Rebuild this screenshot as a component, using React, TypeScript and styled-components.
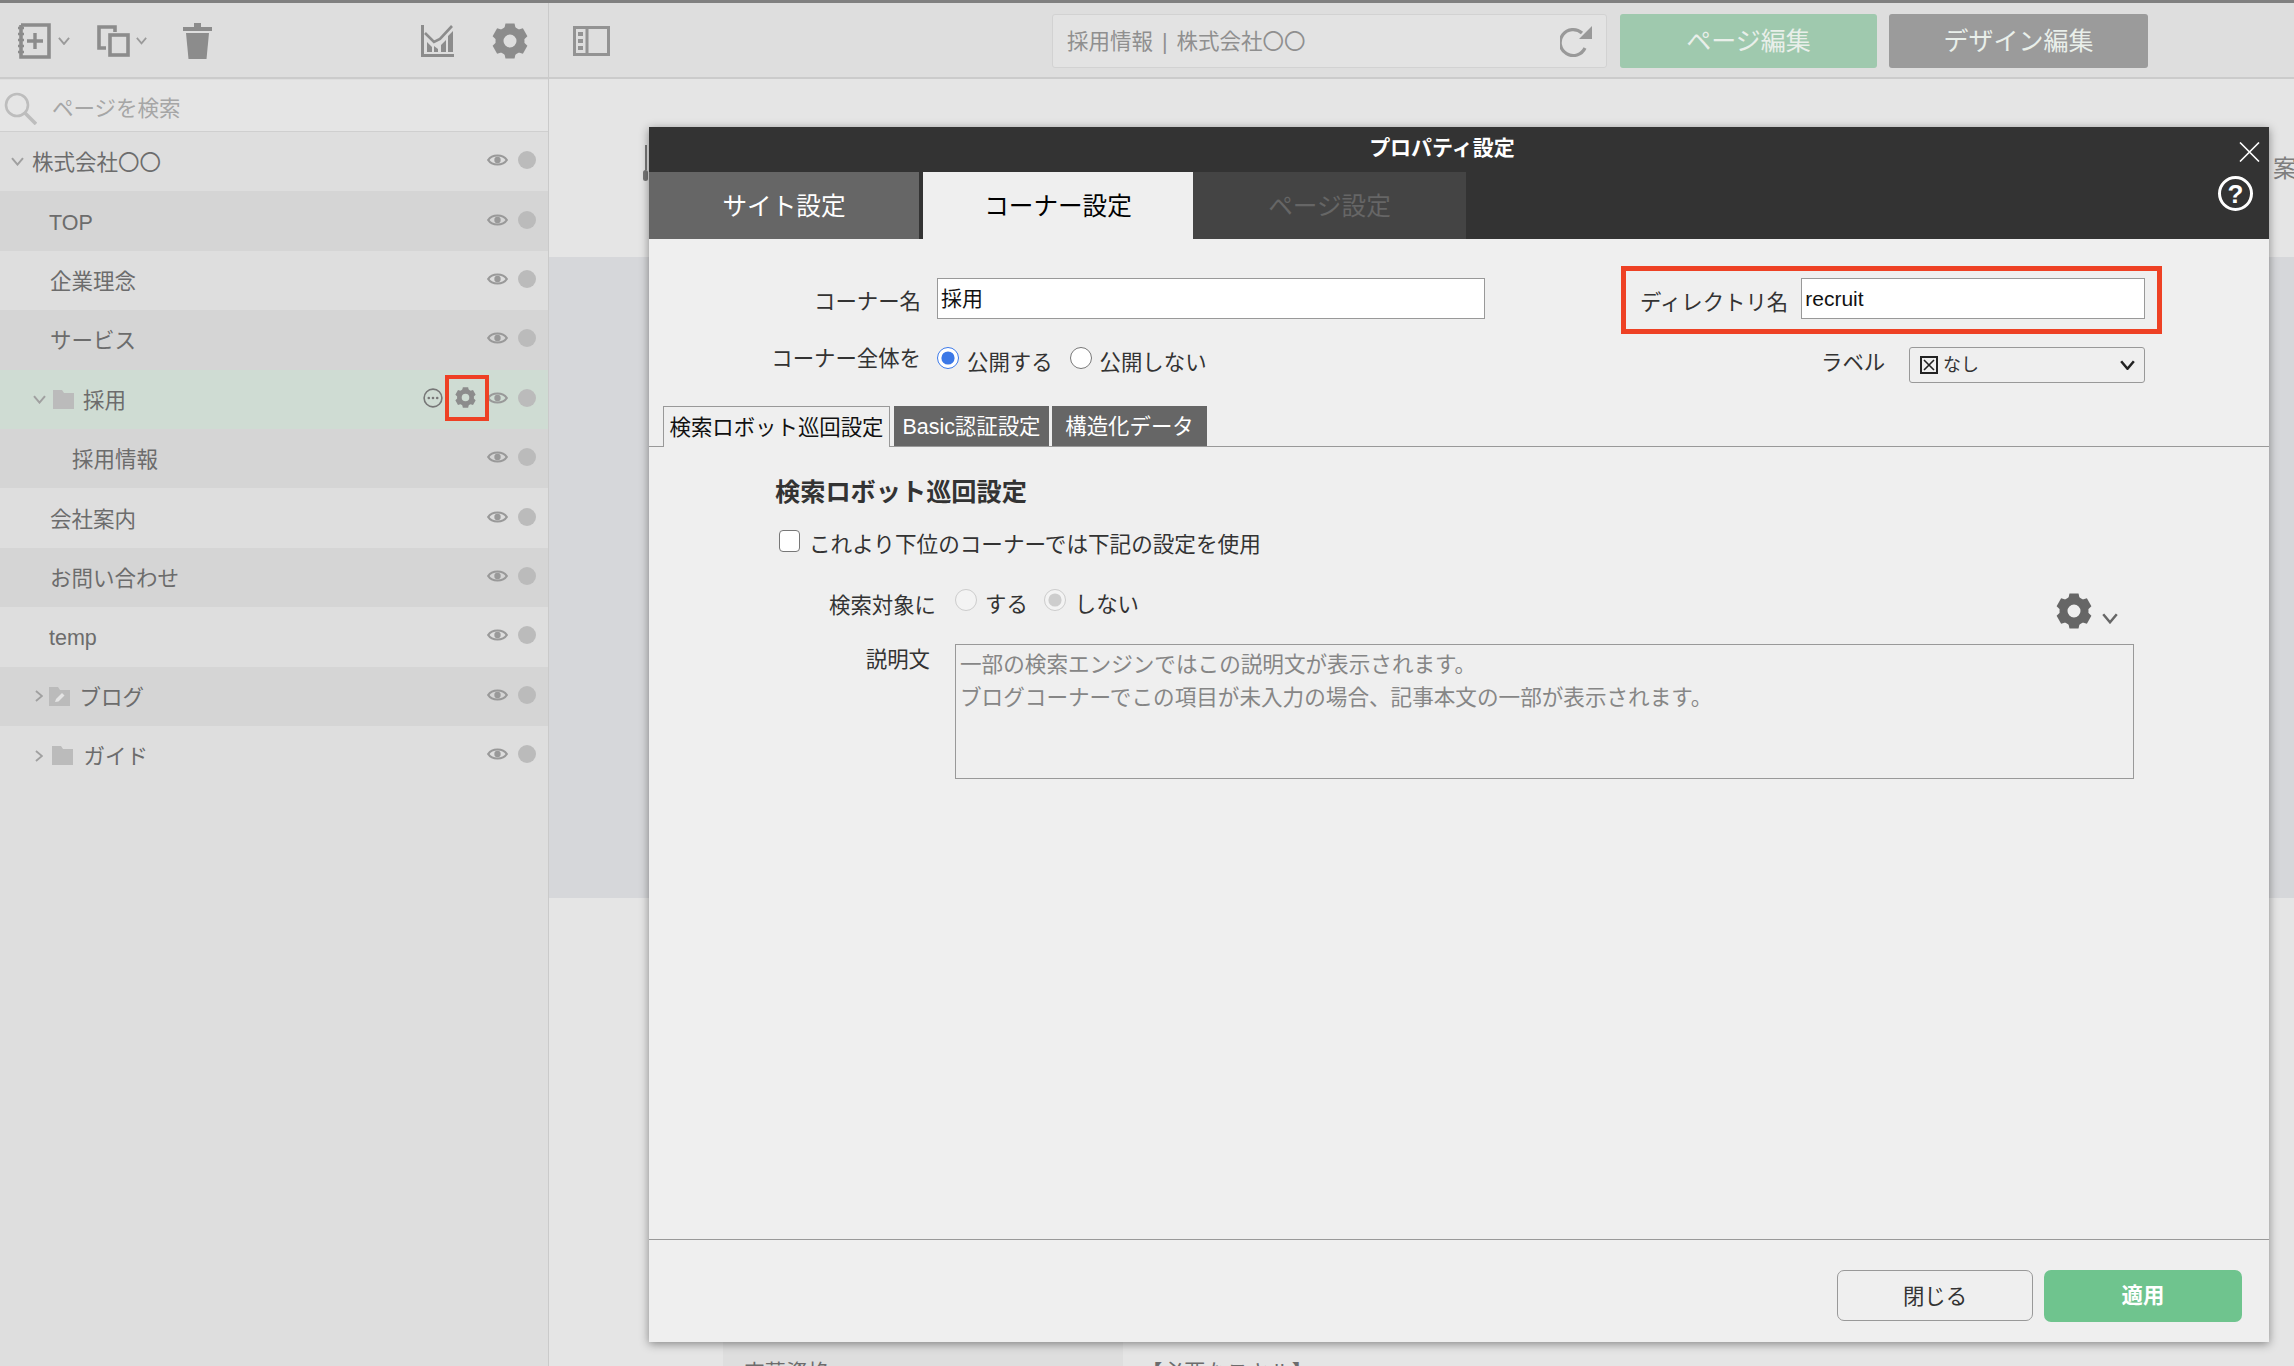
import React from "react";
import styled, { createGlobalStyle } from "styled-components";

const Global = createGlobalStyle`
  html, body { margin: 0; padding: 0; background: #e5e5e5; }
  body { font-family: "Liberation Sans", "Noto Sans CJK JP", "Noto Sans", sans-serif; overflow: hidden; }
  * { box-sizing: border-box; }
`;

const Page = styled.div`
  position: relative; width: 2294px; height: 1366px; overflow: hidden; background: #e5e5e5;
`;
const TopLine = styled.div`height: 3px; background: #808080;`;
const Shell = styled.div`display: flex; height: 1363px;`;

/* Sidebar */
const Sidebar = styled.aside`
  width: 549px; flex: none; background: #dedede; border-right: 1px solid #cacaca;
`;
const SideToolbar = styled.div`
  height: 76px; display: flex; align-items: center; padding: 2px 20px 0 18px; border-bottom: 2px solid #cbcbcb;
`;
const ToolGroup = styled.div<{ $gap?: number; $ml?: number }>`
  display: flex; align-items: center; gap: ${(p) => p.$gap ?? 7}px; margin-left: ${(p) => p.$ml ?? 0}px;
`;
const ToolSpacer = styled.div`flex: 1;`;
const SearchBox = styled.div`
  height: 52px; margin-top: 1px; background: #e5e5e5; border-bottom: 1px solid #cfcfcf; display: flex; align-items: center;
  padding: 6px 0 0 4px; gap: 15px; font-size: 21.5px; line-height: 30px; color: #a6a6a6;
`;
const Row = styled.div<{ $tone: "light" | "dark" | "green"; $indent: number; $gap?: number }>`
  position: relative; height: 59.4px; display: flex; align-items: center; padding: 0 12px 0 ${(p) => p.$indent}px;
  gap: ${(p) => p.$gap ?? 7}px;
  background: ${(p) => (p.$tone === "light" ? "#dedede" : p.$tone === "dark" ? "#d5d5d5" : "#cfdcd3")};
`;
const RowLabel = styled.span<{ $ml?: number }>`
  font-size: 21.5px; line-height: 30px; color: #6c6c6c; margin-left: ${(p) => p.$ml ?? 0}px; margin-top: 3px;
`;
const RowControls = styled.div`
  margin-left: auto; display: flex; align-items: center; gap: 10px; margin-bottom: 3px;
`;
const HoverTools = styled.div`display: flex; align-items: center; gap: 12px; margin-right: 1px;`;
const Dot = styled.span`
  display: block; width: 18px; height: 18px; border-radius: 50%; background: #bbbbbb;
`;
const GearHighlight = styled.div`
  position: absolute; left: 445px; top: 5px; width: 44px; height: 46px; border: 4px solid #ee4124;
`;

/* Main */
const Main = styled.main`flex: 1; min-width: 0; position: relative;`;
const MainToolbar = styled.div`
  height: 76px; display: flex; align-items: center; padding: 2px 0 0 24px; background: #dedede; border-bottom: 2px solid #cbcbcb;
`;
const UrlBox = styled.div`
  width: 555px; height: 54px; margin-left: 442px; background: #e3e3e3; border: 1px solid #d2d2d2; border-radius: 3px;
  display: flex; align-items: center; justify-content: space-between; padding: 0 14px 0 14px;
  font-size: 21.5px; line-height: 28px; color: #8f8f8f;
`;
const UrlText = styled.span`word-spacing: 3px; margin-top: 1px;`;
const ModeButton = styled.div<{ $bg: string; $w: number; $ml: number }>`
  width: ${(p) => p.$w}px; height: 54px; margin-left: ${(p) => p.$ml}px; background: ${(p) => p.$bg}; border-radius: 3px;
  display: flex; align-items: center; justify-content: center; font-size: 25px; line-height: 34px; color: #e9efea;
`;
const Canvas = styled.div`position: relative;`;
const CanvasTitle = styled.div`
  height: 178px; padding: 73px 0 0 1724px; font-size: 24px; line-height: 34px; color: #7e7e7e; white-space: nowrap;
`;
const Band = styled.div`height: 641px; background: #d6d7da;`;
const TableRow = styled.div`display: flex; margin: 433px 0 0 174px; font-size: 21.5px; line-height: 30px; color: #6c6c6c;`;
const TableHead = styled.div`width: 400px; height: 60px; background: #dedede; padding: 27px 0 0 20px;`;
const TableCell = styled.div`padding: 27px 0 0 18px;`;
const Handle = styled.div`
  position: absolute; left: 94px; top: 66px; width: 5px; height: 36px; display: flex; flex-direction: column; align-items: center;
`;
const HandleLine = styled.div`width: 2px; height: 25px; background: #777;`;
const HandleKnob = styled.div`width: 5px; height: 11px; border-radius: 3px; background: #777;`;

/* Modal */
const Modal = styled.section`
  position: absolute; left: 649px; top: 127px; width: 1620px; height: 1215px; background: #efefef;
  box-shadow: 0 2px 9px rgba(0, 0, 0, 0.42); display: flex; flex-direction: column;
`;
const ModalHead = styled.header`position: relative; background: #333; height: 112px; flex: none;`;
const ModalTitle = styled.h2`
  margin: 0; height: 45px; display: flex; align-items: center; justify-content: center;
  padding: 0 34px 4px 0; font-size: 21px; line-height: 30px; font-weight: 700; color: #fff;
`;
const MainTabs = styled.div`display: flex; height: 67px;`;
const MainTab = styled.div<{ $state: "idle" | "active" | "off"; $w: number; $mr?: number }>`
  width: ${(p) => p.$w}px; margin-right: ${(p) => p.$mr ?? 0}px; display: flex; align-items: center; justify-content: center;
  font-size: 24.6px; line-height: 34px; padding-top: 2px;
  background: ${(p) => (p.$state === "idle" ? "#666" : p.$state === "active" ? "#efefef" : "#444")};
  color: ${(p) => (p.$state === "idle" ? "#fff" : p.$state === "active" ? "#000" : "#666")};
`;
const CloseButton = styled.div`position: absolute; right: 9px; top: 15px; width: 21px; height: 20px; line-height: 0;`;
const HelpButton = styled.div`
  position: absolute; left: 1569px; top: 49px; width: 35px; height: 35px; border: 3px solid #fff; border-radius: 50%;
  display: flex; align-items: center; justify-content: center; color: #fff; font-size: 26px; line-height: 1; font-weight: 700;
`;
const ModalBody = styled.div`flex: 1; min-height: 0; display: flex; flex-direction: column;`;
const FieldRowA = styled.div`display: flex; align-items: flex-start; padding-top: 27px;`;
const FieldRowB = styled.div`display: flex; align-items: flex-start; margin-top: 13px; padding-right: 124px;`;
const RightLabel = styled.div<{ $w: number; $mt?: number }>`
  width: ${(p) => p.$w}px; flex: none; text-align: right; font-size: 21.4px; line-height: 30px; color: #333; white-space: nowrap;
  margin-top: ${(p) => p.$mt ?? 0}px;
`;
const TextField = styled.div<{ $w: number }>`
  width: ${(p) => p.$w}px; height: 41px; background: #fff; border: 1px solid #999; padding-left: 3px;
  font-size: 21px; line-height: 40px; color: #111; flex: none;
`;
const NameGroup = styled.div`display: flex; align-items: flex-start; gap: 16px; padding-top: 12px;`;
const DirectoryBox = styled.div`
  width: 541px; height: 68px; margin-left: 136px; border: 5px solid #ee4124; display: flex; align-items: flex-start;
  padding: 7px 12px 0 14px; gap: 13px;
`;
const DirectoryLabel = styled.div`font-size: 21.4px; line-height: 30px; color: #333; white-space: nowrap; margin-top: 10px;`;
const RadioGroup = styled.div<{ $ml: number; $gap: number }>`
  display: flex; align-items: flex-start; margin-left: ${(p) => p.$ml}px; gap: ${(p) => p.$gap}px;
`;
const RadioItem = styled.label<{ $gap: number }>`
  display: flex; align-items: flex-start; gap: ${(p) => p.$gap}px; font-size: 21.4px; line-height: 30px; color: #333;
`;
const Radio = styled.input`
  width: 22px; height: 22px; margin: 0; accent-color: #3b78e7; flex: none;
`;
const RadioText = styled.span`margin-top: 1px;`;
const LabelSelectGroup = styled.div`margin-left: auto; display: flex; align-items: flex-start; gap: 26px;`;
const SelectBox = styled.div`
  width: 236px; height: 36px; border: 1px solid #999; border-radius: 3px; display: flex; align-items: center; padding: 0 9px 0 10px;
  gap: 5px; font-size: 18px; line-height: 26px; color: #333;
`;
const SelectChevron = styled.div`margin-left: auto; line-height: 0;`;
const SubTabs = styled.div`
  display: flex; height: 41px; margin-top: 23px; padding-left: 14px; border-bottom: 1px solid #999; flex: none;
`;
const SubTab = styled.div<{ $active?: boolean; $w: number; $mr?: number }>`
  width: ${(p) => p.$w}px; height: ${(p) => (p.$active ? 41 : 40)}px; margin-right: ${(p) => p.$mr ?? 0}px; padding-top: 2px;
  display: flex; align-items: center; justify-content: center; font-size: 21.4px; line-height: 30px; white-space: nowrap;
  background: ${(p) => (p.$active ? "#efefef" : "#666")}; color: ${(p) => (p.$active ? "#111" : "#fff")};
  border: ${(p) => (p.$active ? "1px solid #999" : "0")}; border-bottom: 0;
`;
const SectionHeading = styled.h3`
  margin: 28px 0 0 126px; font-size: 25.2px; line-height: 34px; font-weight: 700; color: #333;
`;
const CheckRow = styled.label`
  display: flex; align-items: flex-start; margin: 19px 0 0 130px; gap: 9px; font-size: 21.6px; line-height: 34px; color: #333;
`;
const CheckBox = styled.span`
  display: block; width: 21px; height: 22px; margin-top: 2px; background: #fff; border: 1.5px solid #777; border-radius: 4px; flex: none;
`;
const SearchRow = styled.div`display: flex; align-items: flex-start; height: 42px; margin-top: 27px; padding-right: 151px;`;
const GearMenu = styled.div`margin-left: auto; display: flex; align-items: flex-start; gap: 10px; padding-top: 4px;`;
const GearChevron = styled.div`margin-top: 20px; line-height: 0;`;
const DescRow = styled.div`display: flex; align-items: flex-start; margin-top: 13px; gap: 25px;`;
const DescArea = styled.textarea`
  display: block; width: 1179px; height: 135px; background: transparent; border: 1px solid #999; border-radius: 0; resize: none; outline: none;
  padding: 3px 4px; font-family: inherit; font-size: 21.6px; line-height: 33px; color: #868686; overflow: hidden;
`;
const ModalFoot = styled.footer`
  height: 103px; flex: none; border-top: 1px solid #999; display: flex; justify-content: flex-end; align-items: flex-start;
  padding: 30px 27px 0 0; gap: 11px;
`;
const CloseAction = styled.div`
  width: 196px; height: 51px; border: 1px solid #999; border-radius: 7px; display: flex; align-items: center; justify-content: center;
  padding-top: 2px; font-size: 21.4px; line-height: 30px; color: #333;
`;
const ApplyAction = styled.div`
  width: 198px; height: 52px; background: #6fc48e; border-radius: 7px; display: flex; align-items: center; justify-content: center;
  font-size: 21.4px; line-height: 30px; font-weight: 700; color: #fff;
`;

/* Icons */
const Gear = ({ size, color }: { size: number; color: string }) => (
  <svg width={size} height={size} viewBox="0 0 36 36" fill={color}>
    <circle cx="18" cy="18" r="10.5" fill="none" stroke={color} strokeWidth="8" />
    {[0, 60, 120, 180, 240, 300].map((a) => (
      <polygon key={a} points="11.5,9 13.5,0.5 22.5,0.5 24.5,9" transform={`rotate(${a} 18 18)`} />
    ))}
  </svg>
);
const Chevron = ({ dir, w, color, sw = 2 }: { dir: "down" | "right"; w: number; color: string; sw?: number }) =>
  dir === "down" ? (
    <svg width={w} height={w * 0.7} viewBox="0 0 13 9" fill="none" stroke={color} strokeWidth={sw}>
      <polyline points="1,1 6.5,7.5 12,1" />
    </svg>
  ) : (
    <svg width={w * 0.7} height={w} viewBox="0 0 9 13" fill="none" stroke={color} strokeWidth={sw}>
      <polyline points="1,1 7.5,6.5 1,12" />
    </svg>
  );
const Eye = () => (
  <svg width="21" height="14" viewBox="0 0 21 14" fill="none" stroke="#999" strokeWidth="2.2">
    <path d="M1.2 7C5 1 16 1 19.8 7C16 13 5 13 1.2 7Z" />
    <circle cx="10.5" cy="7" r="3.2" fill="#999" stroke="none" />
  </svg>
);
const Folder = ({ pencil }: { pencil?: boolean }) => (
  <svg width="21" height="19" viewBox="0 0 21 19" fill="#bbb">
    <path d="M0 0H9L11 3H21V19H0Z" />
    {pencil && <path d="M6 15L7 12L13 6L15.5 8.5L9.5 14.5Z" fill="#e4e4e4" />}
  </svg>
);
const AddPage = () => (
  <svg width="33" height="36" viewBox="0 0 33 36" fill="none" stroke="#8c8c8c">
    <path d="M3 2H31V34H3V2" strokeWidth="3.6" />
    <path d="M0 5H6M0 11H6M0 17H6M0 23H6M0 29H6" strokeWidth="2.6" />
    <path d="M17 10V26M9 18H25" strokeWidth="3.4" />
  </svg>
);
const CopyPage = () => (
  <svg width="33" height="32" viewBox="0 0 33 32" fill="none" stroke="#8c8c8c" strokeWidth="3.6">
    <path d="M9 23H2V2H18V7" />
    <rect x="13" y="10" width="18" height="20" />
  </svg>
);
const Trash = () => (
  <svg width="29" height="36" viewBox="0 0 29 36" fill="#8c8c8c">
    <rect x="11" y="0" width="7" height="4" />
    <rect x="0" y="4" width="29" height="4" />
    <path d="M3 10H26L23.5 36H5.5Z" />
  </svg>
);
const ChartIcon = () => (
  <svg width="33" height="32" viewBox="0 0 33 32" fill="#8c8c8c">
    <path d="M0 0H3V29H33V32H0Z" />
    <path d="M6 27V17L11 22V27ZM13 27V21L17 24V27ZM20 27V20L25 15V27ZM27 27V11L32 6V27Z" />
    <path d="M4 8L13 17L19 14L31 1" fill="none" stroke="#8c8c8c" strokeWidth="2.6" />
  </svg>
);
const PanelIcon = () => (
  <svg width="37" height="30" viewBox="0 0 37 30" fill="none" stroke="#939393">
    <rect x="1.5" y="1.5" width="34" height="27" strokeWidth="3" />
    <path d="M14 2V28" strokeWidth="3" />
    <path d="M5 8H10M5 15H10M5 22H10" strokeWidth="4" />
  </svg>
);
const Reload = () => (
  <svg width="32" height="31" viewBox="0 0 32 31">
    <path d="M25 22A13 13 0 1 1 22 7" fill="none" stroke="#999" strokeWidth="3.2" />
    <polygon points="32,0 32,13 19,13" fill="#999" />
  </svg>
);
const MoreCircle = () => (
  <svg width="20" height="20" viewBox="0 0 20 20" fill="#777">
    <circle cx="10" cy="10" r="8.9" fill="none" stroke="#777" strokeWidth="1.6" />
    <circle cx="5.8" cy="10" r="1.3" />
    <circle cx="10" cy="10" r="1.3" />
    <circle cx="14.2" cy="10" r="1.3" />
  </svg>
);
const SearchIcon = () => (
  <svg width="33" height="33" viewBox="0 0 33 33" fill="none" stroke="#bdbdbd">
    <circle cx="13" cy="13" r="11" strokeWidth="2.6" />
    <path d="M21 21L32 32" strokeWidth="3.6" />
  </svg>
);
const CloseX = () => (
  <svg width="21" height="20" viewBox="0 0 21 20" stroke="#fff" strokeWidth="1.6">
    <path d="M1 0.5L20 19.5M20 0.5L1 19.5" />
  </svg>
);
const LabelGlyph = () => (
  <svg width="18" height="18" viewBox="0 0 18 18" fill="none" stroke="#222">
    <rect x="1" y="1" width="16" height="16" strokeWidth="2" />
    <path d="M4 4L14 14M14 4L4 14" strokeWidth="1.6" />
  </svg>
);

type TreeItem = {
  label: string;
  indent: number;
  tone: "light" | "dark" | "green";
  gap?: number;
  chevron?: "down" | "right";
  folder?: "plain" | "blog";
  labelGap?: number;
  tools?: boolean;
};

const tree: TreeItem[] = [
  { label: "株式会社〇〇", indent: 11, tone: "light", gap: 8, chevron: "down" },
  { label: "TOP", indent: 49, tone: "dark" },
  { label: "企業理念", indent: 50, tone: "light" },
  { label: "サービス", indent: 50, tone: "dark" },
  { label: "採用", indent: 33, tone: "green", chevron: "down", folder: "plain", labelGap: 2, tools: true },
  { label: "採用情報", indent: 72, tone: "dark" },
  { label: "会社案内", indent: 50, tone: "light" },
  { label: "お問い合わせ", indent: 50, tone: "dark" },
  { label: "temp", indent: 49, tone: "light" },
  { label: "ブログ", indent: 35, tone: "dark", gap: 6, chevron: "right", folder: "blog", labelGap: 3 },
  { label: "ガイド", indent: 35, tone: "light", gap: 9, chevron: "right", folder: "plain", labelGap: 1 },
];

const TreeRow = ({ item }: { item: TreeItem }) => (
  <Row $tone={item.tone} $indent={item.indent} $gap={item.gap}>
    {item.chevron && <Chevron dir={item.chevron} w={item.chevron === "down" ? 13 : 12} color="#a0a0a0" />}
    {item.folder && <Folder pencil={item.folder === "blog"} />}
    <RowLabel $ml={item.labelGap}>{item.label}</RowLabel>
    <RowControls>
      {item.tools && (
        <HoverTools>
          <MoreCircle />
          <Gear size={21} color="#8c8c8c" />
        </HoverTools>
      )}
      <Eye />
      <Dot />
    </RowControls>
    {item.tools && <GearHighlight />}
  </Row>
);

export default function App() {
  return (
    <Page>
      <Global />
      <TopLine />
      <Shell>
        <Sidebar>
          <SideToolbar>
            <ToolGroup>
              <AddPage />
              <Chevron dir="down" w={12} color="#9a9a9a" />
            </ToolGroup>
            <ToolGroup $ml={27} $gap={6}>
              <CopyPage />
              <Chevron dir="down" w={11} color="#9a9a9a" />
            </ToolGroup>
            <ToolGroup $ml={36}>
              <Trash />
            </ToolGroup>
            <ToolSpacer />
            <ToolGroup $gap={38}>
              <ChartIcon />
              <Gear size={36} color="#8c8c8c" />
            </ToolGroup>
          </SideToolbar>
          <SearchBox>
            <SearchIcon />
            ページを検索
          </SearchBox>
          {tree.map((item) => (
            <TreeRow key={item.label} item={item} />
          ))}
        </Sidebar>
        <Main>
          <MainToolbar>
            <PanelIcon />
            <UrlBox>
              <UrlText>採用情報 | 株式会社〇〇</UrlText>
              <Reload />
            </UrlBox>
            <ModeButton $bg="#9fc9ae" $w={257} $ml={13}>ページ編集</ModeButton>
            <ModeButton $bg="#9b9b9b" $w={259} $ml={12}>デザイン編集</ModeButton>
          </MainToolbar>
          <Canvas>
            <CanvasTitle>案内</CanvasTitle>
            <Handle>
              <HandleLine />
              <HandleKnob />
            </Handle>
            <Band />
            <TableRow>
              <TableHead>応募資格</TableHead>
              <TableCell>【必要なスキル】</TableCell>
            </TableRow>
          </Canvas>
        </Main>
      </Shell>
      <Modal>
        <ModalHead>
          <ModalTitle>プロパティ設定</ModalTitle>
          <MainTabs>
            <MainTab $state="idle" $w={270} $mr={4}>サイト設定</MainTab>
            <MainTab $state="active" $w={270}>コーナー設定</MainTab>
            <MainTab $state="off" $w={273}>ページ設定</MainTab>
          </MainTabs>
          <CloseButton>
            <CloseX />
          </CloseButton>
          <HelpButton>?</HelpButton>
        </ModalHead>
        <ModalBody>
          <FieldRowA>
            <NameGroup>
              <RightLabel $w={272} $mt={9}>コーナー名</RightLabel>
              <TextField $w={548}>採用</TextField>
            </NameGroup>
            <DirectoryBox>
              <DirectoryLabel>ディレクトリ名</DirectoryLabel>
              <TextField $w={344}>recruit</TextField>
            </DirectoryBox>
          </FieldRowA>
          <FieldRowB>
            <RightLabel $w={272} $mt={-3}>コーナー全体を</RightLabel>
            <RadioGroup $ml={16} $gap={17}>
              <RadioItem $gap={8}>
                <Radio type="radio" name="open" defaultChecked />
                <RadioText>公開する</RadioText>
              </RadioItem>
              <RadioItem $gap={8}>
                <Radio type="radio" name="open" />
                <RadioText>公開しない</RadioText>
              </RadioItem>
            </RadioGroup>
            <LabelSelectGroup>
              <RightLabel $w={62} $mt={1}>ラベル</RightLabel>
              <SelectBox>
                <LabelGlyph />
                なし
                <SelectChevron>
                  <Chevron dir="down" w={15} color="#222" sw={2.2} />
                </SelectChevron>
              </SelectBox>
            </LabelSelectGroup>
          </FieldRowB>
          <SubTabs>
            <SubTab $active $w={227} $mr={4}>検索ロボット巡回設定</SubTab>
            <SubTab $w={155} $mr={3}>Basic認証設定</SubTab>
            <SubTab $w={155}>構造化データ</SubTab>
          </SubTabs>
          <SectionHeading>検索ロボット巡回設定</SectionHeading>
          <CheckRow>
            <CheckBox />
            これより下位のコーナーでは下記の設定を使用
          </CheckRow>
          <SearchRow>
            <RightLabel $w={287} $mt={2}>検索対象に</RightLabel>
            <RadioGroup $ml={19} $gap={16}>
              <RadioItem $gap={8}>
                <Radio type="radio" name="robot" disabled />
                <RadioText>する</RadioText>
              </RadioItem>
              <RadioItem $gap={9}>
                <Radio type="radio" name="robot" disabled defaultChecked />
                <RadioText>しない</RadioText>
              </RadioItem>
            </RadioGroup>
            <GearMenu>
              <Gear size={36} color="#666" />
              <GearChevron>
                <Chevron dir="down" w={16} color="#666" />
              </GearChevron>
            </GearMenu>
          </SearchRow>
          <DescRow>
            <RightLabel $w={281} $mt={1}>説明文</RightLabel>
            <DescArea
              readOnly
              defaultValue={"一部の検索エンジンではこの説明文が表示されます。\nブログコーナーでこの項目が未入力の場合、記事本文の一部が表示されます。"}
            />
          </DescRow>
        </ModalBody>
        <ModalFoot>
          <CloseAction>閉じる</CloseAction>
          <ApplyAction>適用</ApplyAction>
        </ModalFoot>
      </Modal>
    </Page>
  );
}
